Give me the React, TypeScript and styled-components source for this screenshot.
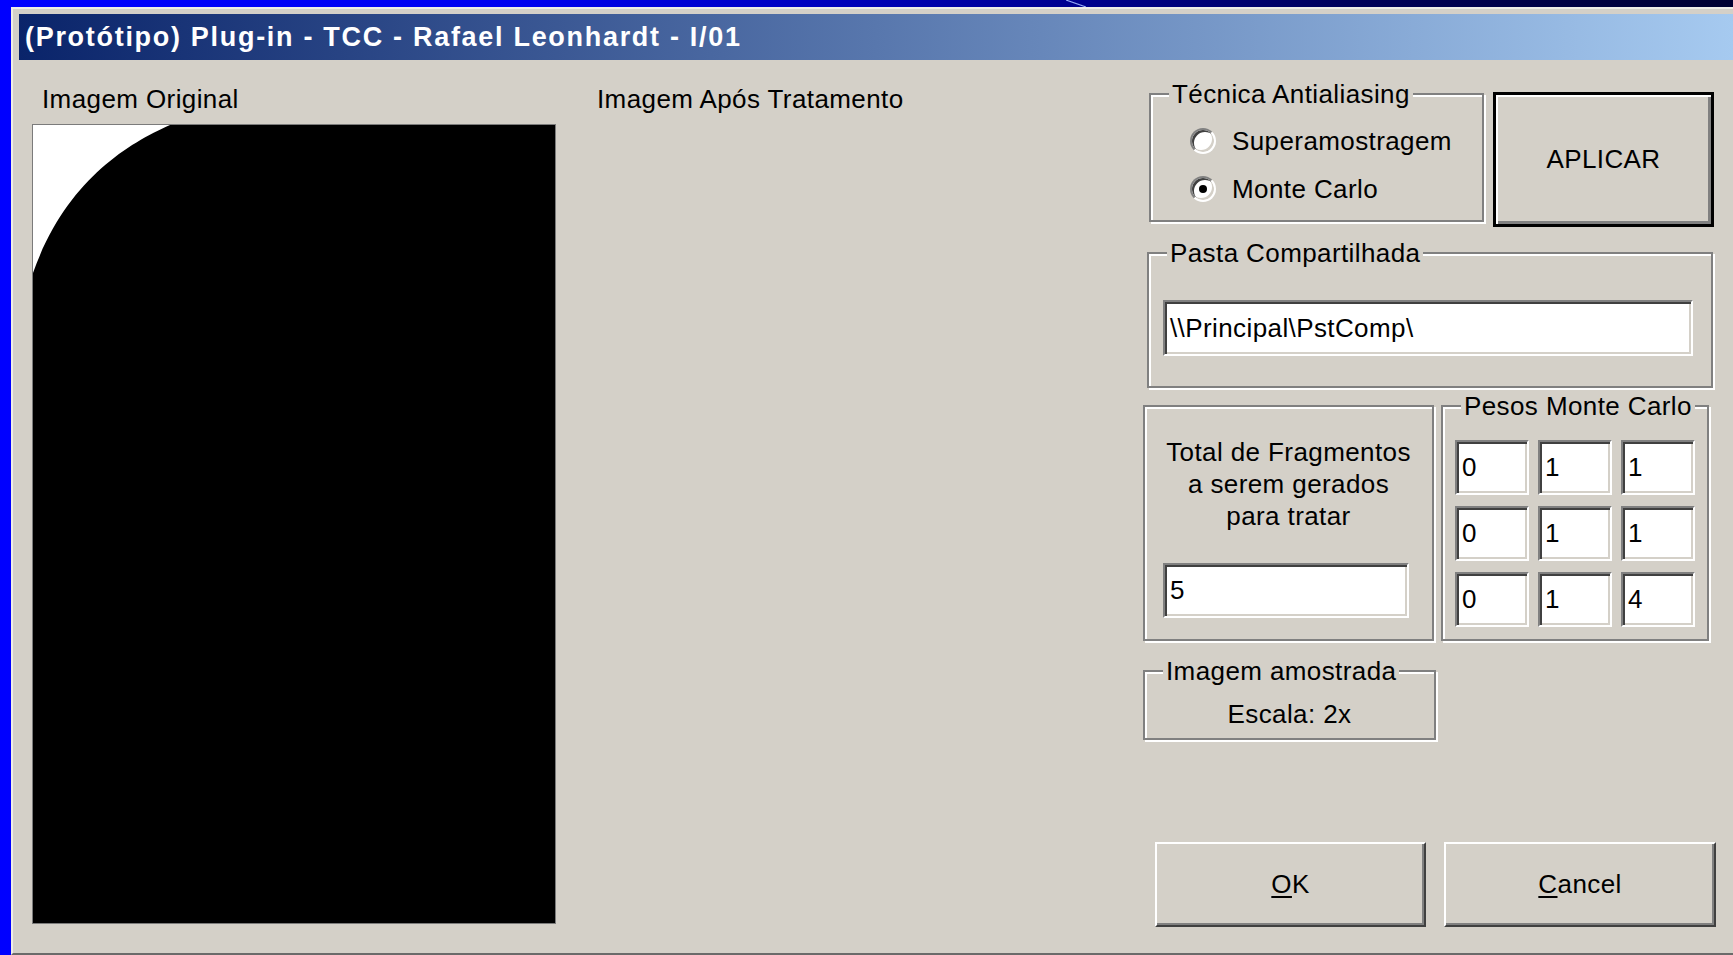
import styled, { createGlobalStyle } from 'styled-components';

const face = '#d4d0c8';

const GlobalStyle = createGlobalStyle`
  html, body {
    margin: 0;
    padding: 0;
    background: #0000ff;
  }
  body {
    font-family: 'Liberation Sans', Arial, sans-serif;
  }
`;

const Desktop = styled.div`
  width: 1733px;
  height: 955px;
  overflow: hidden;
  display: flex;
  background:
    linear-gradient(to top right, transparent 42%, #9fb4ff 50%, transparent 58%) no-repeat 1066px 0 / 20px 7px,
    linear-gradient(90deg, #0000ff 0%, #0000f0 30%, #0000b0 52%, #00005a 78%, #000032 100%);
`;

const Window = styled.div`
  flex: 1;
  margin: 7px 0 0 11px;
  display: flex;
  flex-direction: column;
  box-sizing: border-box;
  padding: 5px 0 0 6px;
  background: ${face};
  border-top: 2px solid #efede7;
  border-left: 2px solid #efede7;
  border-bottom: 2px solid #6a6a6a;
  color: #000;
  font-size: 26px;
  letter-spacing: 0.4px;
`;

const TitleBar = styled.div`
  flex: none;
  height: 46px;
  display: flex;
  align-items: center;
  padding-left: 6px;
  background: linear-gradient(90deg, #0a246a 0%, #a6caf0 100%);
  color: #fff;
  font-weight: bold;
  font-size: 27px;
  letter-spacing: 1.7px;
  white-space: nowrap;
`;

const DialogBody = styled.div`
  flex: 1;
  display: flex;
  padding: 0 17px 0 13px;
`;

const OriginalColumn = styled.div`
  flex: none;
  width: 524px;
  display: flex;
  flex-direction: column;
`;

const ResultColumn = styled.div`
  flex: 1;
  margin-left: 41px;
  display: flex;
  flex-direction: column;
`;

const Caption = styled.div<{ $indent?: number }>`
  margin-top: 24px;
  padding-left: ${p => p.$indent ?? 0}px;
  line-height: 30px;
  white-space: nowrap;
`;

const Picture = styled.div`
  margin-top: 10px;
  width: 524px;
  height: 800px;
  box-sizing: border-box;
  border: 1px solid #7b7b7b;
  background: #000;

  svg {
    display: block;
  }
`;

const SidePanel = styled.div`
  flex: none;
  width: 573px;
  display: flex;
  flex-direction: column;
  padding-top: 32px;
`;

const PanelRow = styled.div`
  display: flex;
  align-items: flex-start;
`;

/* etched frame: grey line with a white one offset by 2px */
const GroupBox = styled.div`
  flex: none;
  box-sizing: border-box;
  border: 2px solid #808080;
  box-shadow: inset 2px 2px 0 #fff, 2px 2px 0 #fff;
  background: ${face};
`;

const Legend = styled.div`
  width: fit-content;
  margin: -16px 0 0 18px;
  padding: 0 3px;
  line-height: 30px;
  background: ${face};
  white-space: nowrap;
`;

const TechniqueGroup = styled(GroupBox)`
  width: 335px;
  height: 129px;
  margin: 1px 0 0 6px;
`;

const RadioList = styled.div`
  padding-top: 8px;
`;

const RadioRow = styled.label`
  height: 48px;
  display: flex;
  align-items: center;
  gap: 16px;
  padding-left: 39px;
  white-space: nowrap;
`;

const Radio = styled.span<{ $checked?: boolean }>`
  flex: none;
  width: 26px;
  height: 26px;
  box-sizing: border-box;
  border-radius: 50%;
  background: #fff;
  border: 2px solid;
  border-color: #808080 #fff #fff #808080;
  box-shadow: inset 2px 2px 0 #404040, inset -2px -2px 0 ${face};
  display: flex;
  align-items: center;
  justify-content: center;

  &::after {
    content: '';
    width: 8px;
    height: 8px;
    border-radius: 50%;
    background: ${p => (p.$checked ? '#000' : 'transparent')};
  }
`;

const Button = styled.button`
  flex: none;
  box-sizing: border-box;
  padding: 0;
  background: ${face};
  color: #000;
  font: inherit;
  letter-spacing: inherit;
  border: 2px solid;
  border-color: #fff #404040 #404040 #fff;
  box-shadow: inset -2px -2px 0 #808080;
  cursor: pointer;

  u {
    text-decoration-thickness: 2px;
    text-underline-offset: 3px;
  }
`;

const ApplyButton = styled(Button)`
  width: 221px;
  height: 135px;
  margin-left: 9px;
  border: 3px solid #000;
  box-shadow: inset 2px 2px 0 #fff, inset -3px -3px 0 #808080;
`;

const DialogButton = styled(Button)`
  width: 272px;
  height: 85px;
  margin-left: 18px;

  &:first-child {
    width: 271px;
    margin-left: 12px;
  }
`;

const Field = styled.div`
  box-sizing: border-box;
  padding-left: 5px;
  display: flex;
  align-items: center;
  background: #fff;
  border: 2px solid;
  border-color: #808080 #fff #fff #808080;
  box-shadow: inset 2px 2px 0 #404040, inset -2px -2px 0 ${face};
  white-space: nowrap;
  overflow: hidden;
`;

const FolderGroup = styled(GroupBox)`
  width: 566px;
  height: 136px;
  margin: 25px 0 0 4px;
`;

const FolderField = styled(Field)`
  width: 530px;
  height: 56px;
  margin: 32px 0 0 14px;
`;

const MiddleRow = styled(PanelRow)`
  margin-top: 17px;
`;

const FragmentsGroup = styled(GroupBox)`
  width: 291px;
  height: 236px;
`;

const FragmentsText = styled.div`
  margin-top: 29px;
  line-height: 32px;
  text-align: center;
  white-space: nowrap;
`;

const FragmentsField = styled(Field)`
  width: 246px;
  height: 55px;
  margin: 31px 0 0 18px;
`;

const WeightsGroup = styled(GroupBox)`
  width: 268px;
  height: 236px;
  margin-left: 7px;
`;

const WeightsGrid = styled.div`
  display: grid;
  grid-template-columns: repeat(3, 74px);
  grid-auto-rows: 55px;
  column-gap: 9px;
  row-gap: 11px;
  margin: 19px 0 0 12px;
`;

const SampleGroup = styled(GroupBox)`
  width: 293px;
  height: 70px;
  margin-top: 29px;
`;

const ScaleText = styled.div`
  margin-top: 13px;
  line-height: 30px;
  text-align: center;
  white-space: nowrap;
`;

const ButtonRow = styled(PanelRow)`
  margin-top: 102px;
`;

const weights = ['0', '1', '1', '0', '1', '1', '0', '1', '4'];

export default function App() {
  return (
    <>
      <GlobalStyle />
      <Desktop>
        <Window>
          <TitleBar>(Protótipo) Plug-in - TCC - Rafael Leonhardt - I/01</TitleBar>
          <DialogBody>
            <OriginalColumn>
              <Caption $indent={10}>Imagem Original</Caption>
              <Picture>
                <svg width="522" height="798" viewBox="0 0 522 798">
                  <path d="M0 0 H137 C92 20 32 58 0 148 Z" fill="#fff" />
                </svg>
              </Picture>
            </OriginalColumn>

            <ResultColumn>
              <Caption>Imagem Após Tratamento</Caption>
            </ResultColumn>

            <SidePanel>
              <PanelRow>
                <TechniqueGroup>
                  <Legend>Técnica Antialiasing</Legend>
                  <RadioList>
                    <RadioRow>
                      <Radio />
                      Superamostragem
                    </RadioRow>
                    <RadioRow>
                      <Radio $checked />
                      Monte Carlo
                    </RadioRow>
                  </RadioList>
                </TechniqueGroup>
                <ApplyButton>APLICAR</ApplyButton>
              </PanelRow>

              <FolderGroup>
                <Legend>Pasta Compartilhada</Legend>
                <FolderField>{'\\\\Principal\\PstComp\\'}</FolderField>
              </FolderGroup>

              <MiddleRow>
                <FragmentsGroup>
                  <FragmentsText>
                    Total de Fragmentos
                    <br />a serem gerados
                    <br />
                    para tratar
                  </FragmentsText>
                  <FragmentsField>5</FragmentsField>
                </FragmentsGroup>
                <WeightsGroup>
                  <Legend>Pesos Monte Carlo</Legend>
                  <WeightsGrid>
                    {weights.map((w, i) => (
                      <Field key={i}>{w}</Field>
                    ))}
                  </WeightsGrid>
                </WeightsGroup>
              </MiddleRow>

              <SampleGroup>
                <Legend>Imagem amostrada</Legend>
                <ScaleText>Escala: 2x</ScaleText>
              </SampleGroup>

              <ButtonRow>
                <DialogButton>
                  <u>O</u>K
                </DialogButton>
                <DialogButton>
                  <u>C</u>ancel
                </DialogButton>
              </ButtonRow>
            </SidePanel>
          </DialogBody>
        </Window>
      </Desktop>
    </>
  );
}
